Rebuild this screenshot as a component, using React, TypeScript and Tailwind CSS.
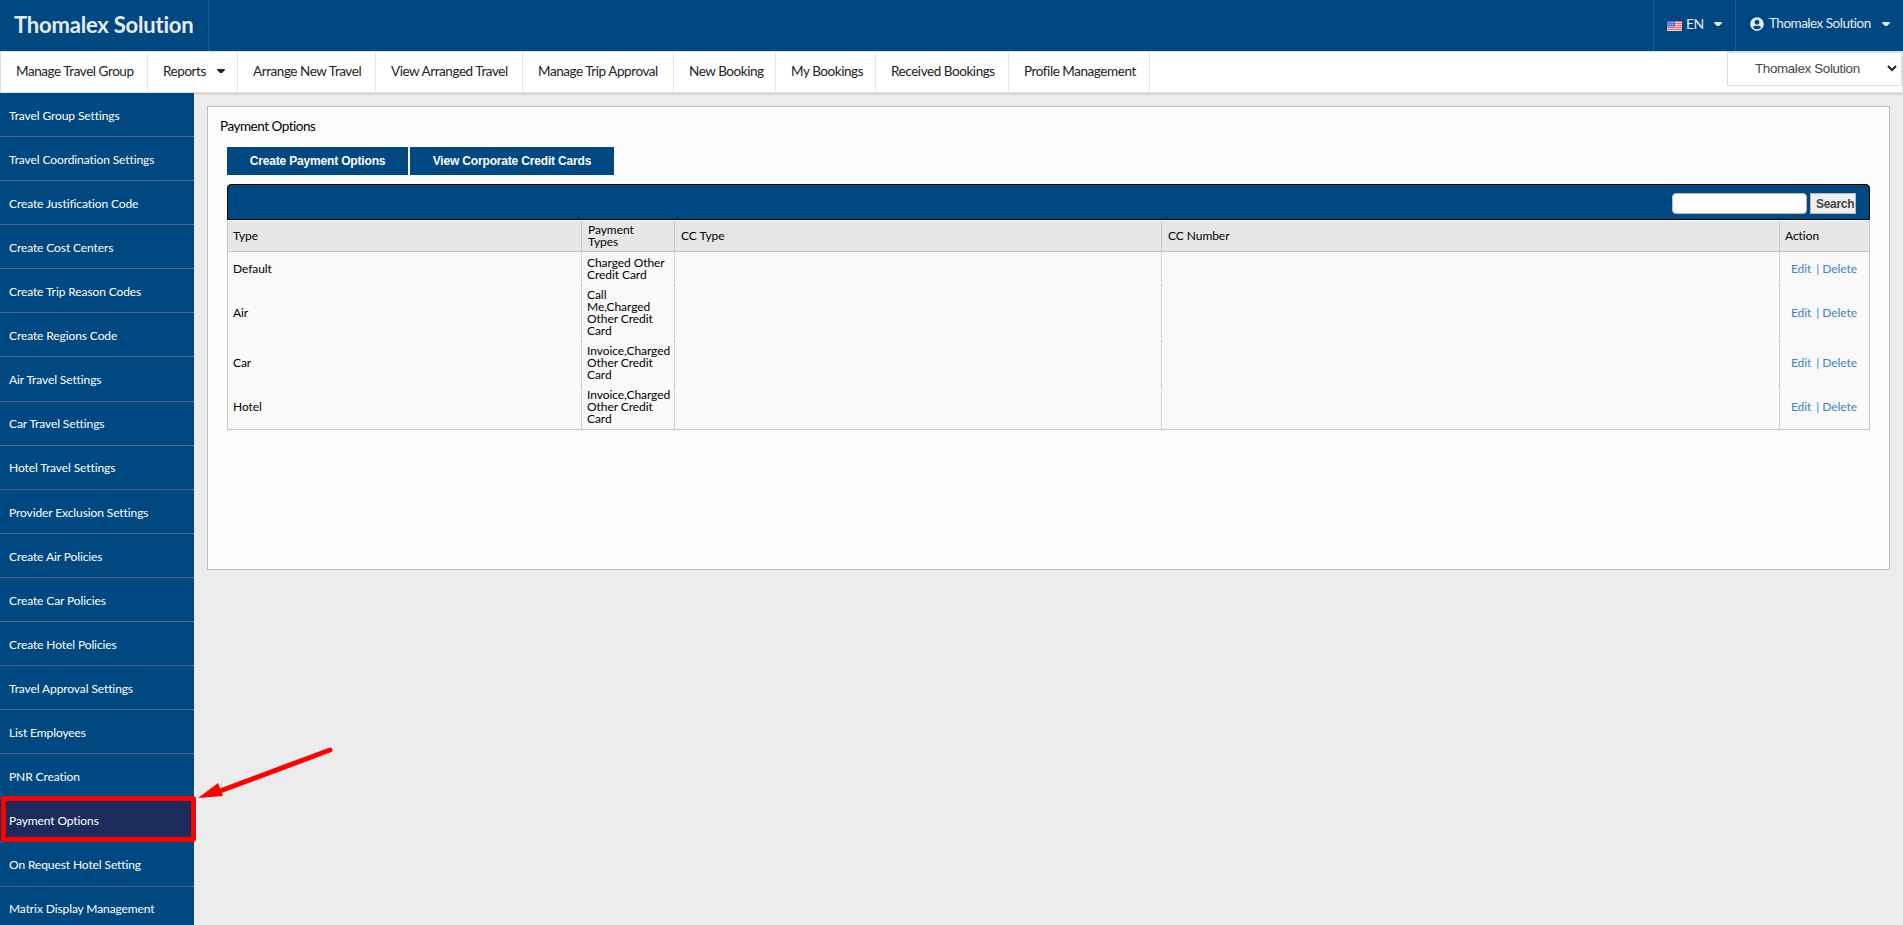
import { FaUserCircle } from "react-icons/fa";

const NAV_ITEMS = [
  { label: "Manage Travel Group", width: "w-[147px]" },
  { label: "Reports", width: "w-[90px]", menu: true },
  { label: "Arrange New Travel", width: "w-[138px]" },
  { label: "View Arranged Travel", width: "w-[147px]" },
  { label: "Manage Trip Approval", width: "w-[151px]" },
  { label: "New Booking", width: "w-[102px]" },
  { label: "My Bookings", width: "w-[100px]" },
  { label: "Received Bookings", width: "w-[133px]" },
  { label: "Profile Management", width: "w-[141px]" },
];

const SIDEBAR_ITEMS = [
  "Travel Group Settings",
  "Travel Coordination Settings",
  "Create Justification Code",
  "Create Cost Centers",
  "Create Trip Reason Codes",
  "Create Regions Code",
  "Air Travel Settings",
  "Car Travel Settings",
  "Hotel Travel Settings",
  "Provider Exclusion Settings",
  "Create Air Policies",
  "Create Car Policies",
  "Create Hotel Policies",
  "Travel Approval Settings",
  "List Employees",
  "PNR Creation",
  "Payment Options",
  "On Request Hotel Setting",
  "Matrix Display Management",
];

const ROWS = [
  { type: "Default", payment: ["Charged Other", "Credit Card"], height: "h-[33px] pt-[2px]" },
  { type: "Air", payment: ["Call", "Me,Charged", "Other Credit", "Card"], height: "h-[56px]" },
  { type: "Car", payment: ["Invoice,Charged", "Other Credit", "Card"], height: "h-[44px]" },
  { type: "Hotel", payment: ["Invoice,Charged", "Other Credit", "Card"], height: "h-[44px]" },
];

const GRID = "grid grid-cols-[353px_93px_487px_618px_90px]";

function Caret({ className }: { className: string }) {
  return (
    <svg viewBox="0 0 8 4" className={`h-1 w-2 shrink-0 fill-current ${className}`}>
      <path d="M.5 0h7L8 1 5 4H3L0 1z" />
    </svg>
  );
}

function UsFlag() {
  return (
    <svg viewBox="0 0 15 10" className="mt-[3px] h-[10px] w-[15px] shrink-0">
      <path d="M0 0h15v10H0z" fill="#f6d5d5" />
      <path d="M0 .5h15M0 2.5h15M0 4.5h15M0 6.5h15M0 8.5h15" stroke="#e8675f" />
      <path d="M0 0h8v5.5H0z" fill="#5279dc" />
      <path d="M1 1.5h6M1 3.5h6" stroke="#9db4ee" strokeDasharray="1 1" />
    </svg>
  );
}

function TopBar() {
  return (
    <header className="flex h-[51px] bg-[#004881] text-[#e6ebf0]">
      <div className="w-[209px] border-r border-[#1a5a8e] pl-[14px] text-[22px] leading-[50px] font-bold tracking-[-0.2px]">
        Thomalex Solution
      </div>
      <div className="ml-auto flex w-[82px] items-center border-l border-[#1a5a8e] pb-[3px] pl-[13px] text-sm">
        <UsFlag />
        <span className="ml-[4px] tracking-[-0.5px]">EN</span>
        <Caret className="ml-[10px]" />
      </div>
      <div className="flex w-[168px] items-center border-l border-[#1a5a8e] pb-[3px] pl-[14px] text-sm">
        <FaUserCircle className="size-[14px] shrink-0" />
        <span className="ml-[5px] text-[13.5px] tracking-[-0.5px] whitespace-nowrap">Thomalex Solution</span>
        <Caret className="ml-[11px]" />
      </div>
    </header>
  );
}

function NavBar() {
  return (
    <nav className="flex h-[41.9px] border border-[#ddd] bg-white shadow-[0_1px_2px_rgba(0,0,0,0.15)]">
      {NAV_ITEMS.map((item) => (
        <a
          key={item.label}
          className={`flex items-center border-r border-[#e7e7e7] pb-[1px] pl-[15px] text-[13.5px] tracking-[-0.44px] whitespace-nowrap text-[#222] ${item.width}`}
        >
          {item.label}
          {item.menu && <Caret className="ml-[11px]" />}
        </a>
      ))}
      <div className="ml-auto flex h-[34px] w-[175px] items-center border border-[#ddd] pb-[1px] pl-[27px] font-['Liberation_Sans',sans-serif] text-[13.33px] tracking-[-0.33px] text-[#444]">
        Thomalex Solution
        <svg viewBox="0 0 10 7" className="mr-[4px] ml-auto h-[7px] w-[10px]">
          <path d="M1 1l4 4 4-4" fill="none" stroke="#222" strokeWidth="2" />
        </svg>
      </div>
    </nav>
  );
}

function Sidebar() {
  return (
    <aside className="relative z-10 w-[194px] shrink-0">
      {SIDEBAR_ITEMS.map((label) => {
        const active = label === "Payment Options";
        return (
          <a
            key={label}
            className={`relative flex h-[44.094px] items-center border-b border-[#4d6a8a] pt-[2.5px] pl-[9px] text-xs tracking-[-0.1px] whitespace-nowrap text-white ${active ? "bg-[#1b2b5c]" : "bg-[#004881]"}`}
          >
            {label}
            {active && (
              <>
                <span className="absolute -top-[2px] left-[1px] h-[46px] w-[195px] rounded-[3px] border-[5px] border-[#fe0000]" />
                <svg viewBox="0 0 136 54" className="absolute -top-[52px] left-[198px] h-[54px] w-[136px]">
                  <path d="M132 4L22 45" stroke="#fe0000" strokeWidth="5" strokeLinecap="round" />
                  <path d="M0 52L20 37L25 50z" fill="#fe0000" />
                </svg>
              </>
            )}
          </a>
        );
      })}
    </aside>
  );
}

function PaymentTable() {
  return (
    <div className="mt-[9px] ml-[19px] w-[1643px] text-xs leading-[11.9px] tracking-[-0.06px]">
      <div className="flex h-9 items-center rounded-t-[4px] border border-black bg-[#004881] pt-[3px]">
        <input className="ml-auto h-[21px] w-[135px] rounded-[4px] border border-[#bbb] bg-white" />
        <button
          type="button"
          className="mr-[13px] ml-[3px] h-[21px] w-[46px] overflow-hidden border border-[#bbb] bg-[#efefef] pt-[1px] pl-[5px] text-left font-['Liberation_Sans',sans-serif] text-xs font-bold tracking-[-0.3px] text-[#444]"
        >
          Search
        </button>
      </div>
      <div className="mt-[1px] border-x border-b border-[#c5c5c5]">
        <div className={`${GRID} h-[31px] items-stretch border-b border-[#c5c5c5] bg-[#e7e7e7]`}>
          {["Type", "Payment Types", "CC Type", "CC Number", "Action"].map((heading, i) => (
            <div
              key={heading}
              className={`flex items-center ${i % 4 === 0 ? "pl-[5px]" : "pl-[6px]"} ${i > 0 ? "border-l border-[#c5c5c5]" : ""} ${i === 1 ? "pr-[20px]" : ""}`}
            >
              {heading}
            </div>
          ))}
        </div>
        {ROWS.map((row) => (
          <div key={row.type} className={`${GRID} bg-[#f9f9f9]`}>
            <div className={`flex items-center pl-[5px] ${row.height}`}>{row.type}</div>
            <div className={`flex flex-col justify-center border-l border-dotted border-[#b5b5b5] pl-[5px] whitespace-nowrap ${row.height}`}>
              {row.payment.map((line) => (
                <span key={line}>{line}</span>
              ))}
            </div>
            <div className="border-l border-dotted border-[#b5b5b5]" />
            <div className="border-l border-dotted border-[#b5b5b5]" />
            <div className={`flex items-center border-l border-dotted border-[#b5b5b5] pl-[11px] text-[#3f83c9] ${row.height}`}>
              <a>Edit</a>
              <span className="ml-[5px]">|</span>
              <a className="ml-[3px]">Delete</a>
            </div>
          </div>
        ))}
      </div>
    </div>
  );
}

export default function App() {
  return (
    <div className="h-[925px] w-[1903px] overflow-hidden bg-[#ececec] font-['Lato',sans-serif] text-black">
      <TopBar />
      <NavBar />
      <div className="flex">
        <Sidebar />
        <main className="mt-[13px] ml-[13px] h-[464px] w-[1683px] border border-[#c0c0c0] bg-[#fcfcfc]">
          <h1 className="mt-[10px] ml-[12px] text-[13.5px] leading-[18px] tracking-[-0.48px]">Payment Options</h1>
          <div className="mt-[12px] ml-[19px] flex gap-[2px] font-['Liberation_Sans',sans-serif] text-xs font-bold tracking-[-0.17px] text-white">
            <button type="button" className="h-7 w-[181px] bg-[#004881]">
              Create Payment Options
            </button>
            <button type="button" className="h-7 w-[204px] bg-[#004881]">
              View Corporate Credit Cards
            </button>
          </div>
          <PaymentTable />
        </main>
      </div>
    </div>
  );
}
